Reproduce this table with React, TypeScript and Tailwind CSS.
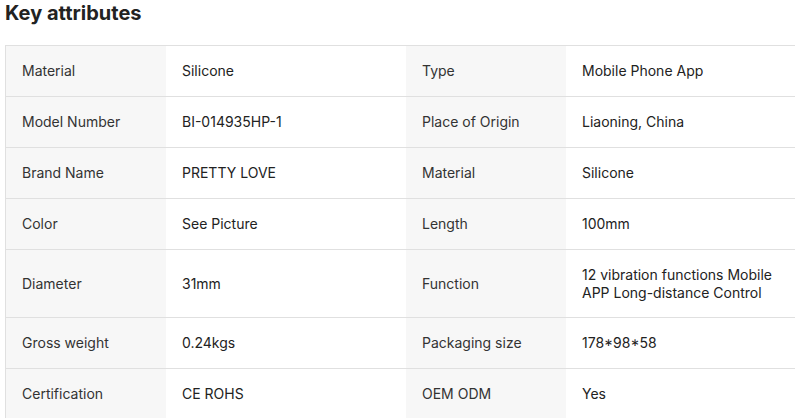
const rows: [string, string, string, string][] = [
  ["Material", "Silicone", "Type", "Mobile Phone App"],
  ["Model Number", "BI-014935HP-1", "Place of Origin", "Liaoning, China"],
  ["Brand Name", "PRETTY LOVE", "Material", "Silicone"],
  ["Color", "See Picture", "Length", "100mm"],
  ["Diameter", "31mm", "Function", "12 vibration functions Mobile APP Long-distance Control"],
  ["Gross weight", "0.24kgs", "Packaging size", "178*98*58"],
  ["Certification", "CE ROHS", "OEM ODM", "Yes"],
];

const App = () => {
  return (
    <div className="w-[795px] h-[418px] overflow-hidden bg-white font-['Inter','Liberation_Sans',sans-serif] text-[#222]">
      <h2 className="pl-[5px] pt-[1px] text-[20px] leading-[24px] font-bold text-[#222]">Key attributes</h2>
      <div className="ml-[5px] mt-[20px] w-[801px] border border-[#e0e0e0] text-[14px] leading-[17.5px]">
        {rows.map((r, i) => (
          <div key={i} className={`grid grid-cols-[160px_240px_160px_240px] ${i > 0 ? "border-t border-[#e0e0e0]" : ""}`}>
            <div className="bg-[#f7f7f7] px-4 flex items-center min-h-[50px] text-[#333]">{r[0]}</div>
            <div className="px-4 flex items-center min-h-[50px]">{r[1]}</div>
            <div className="bg-[#f7f7f7] px-4 flex items-center min-h-[50px] text-[#333]">{r[2]}</div>
            <div className="px-4 py-4 flex items-center min-h-[50px]">{r[3]}</div>
          </div>
        ))}
      </div>
    </div>
  );
};

export default App;
